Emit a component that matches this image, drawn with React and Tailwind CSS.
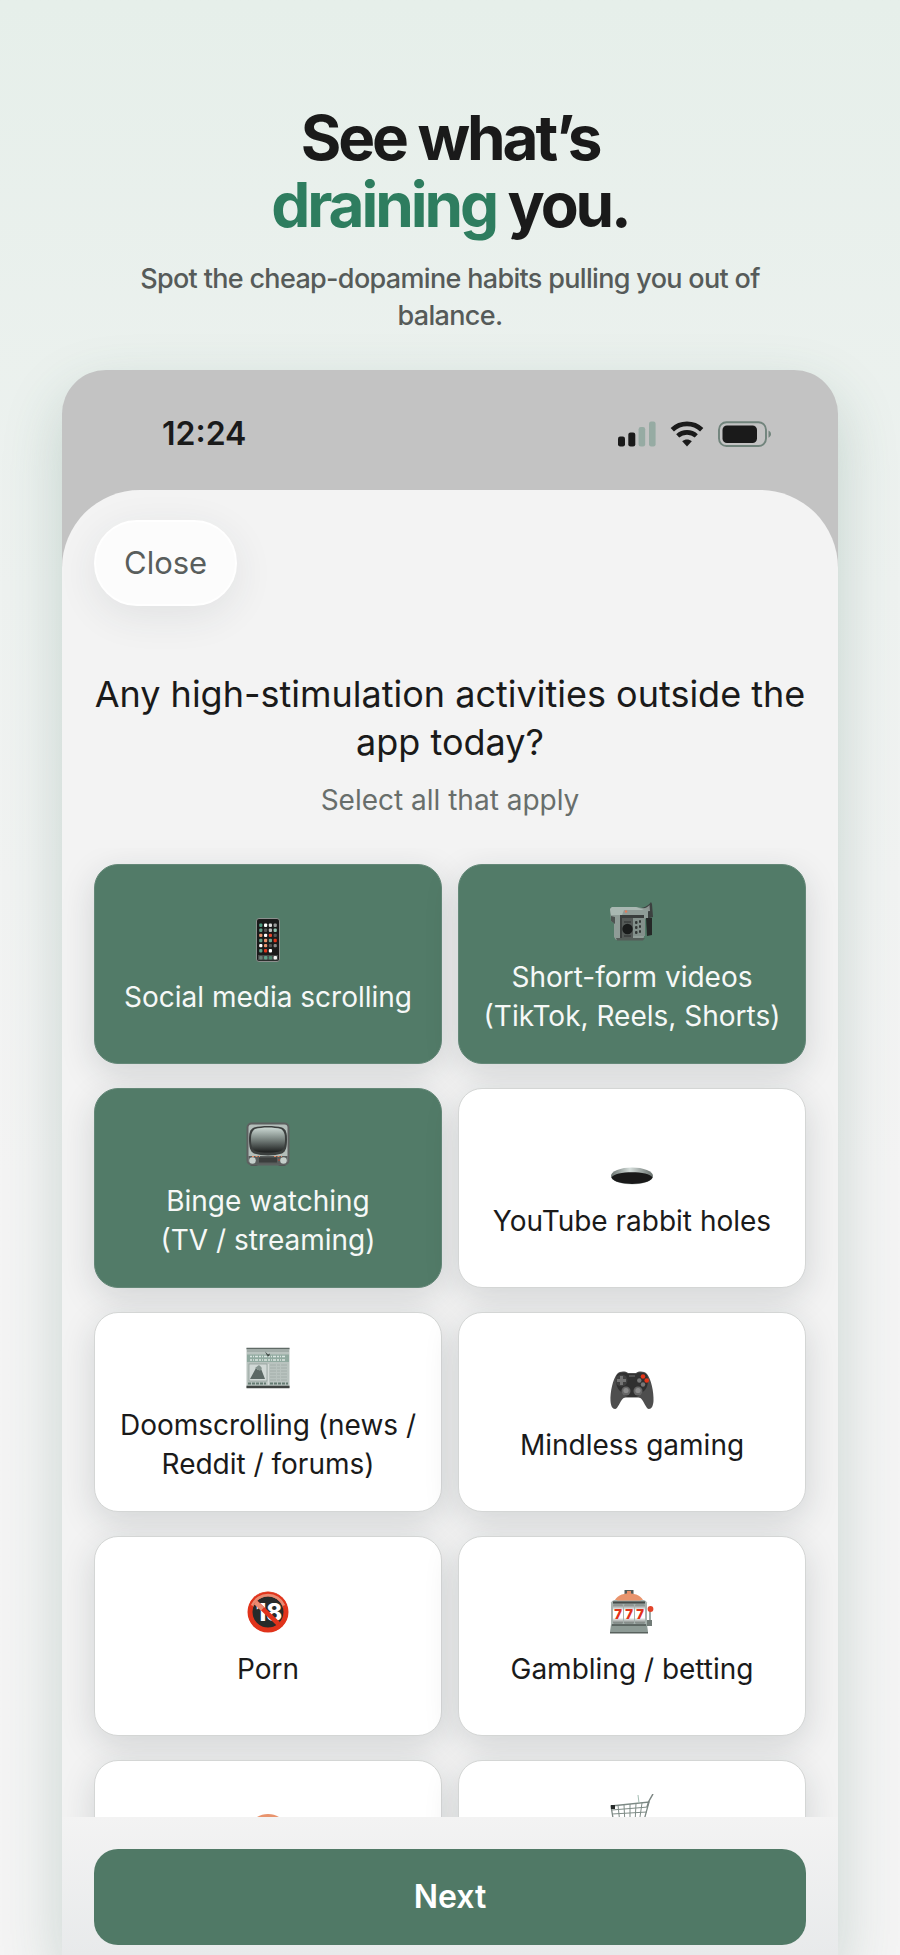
import React, { useState } from "react";

function PhoneIcon() {
  const colors = ["#4f9a80", "#fff", "#ddd", "#999", "#5f9f88", "#555", "#bbb", "#8fc3b0", "#e8936c", "#fff", "#e0432a", "#555", "#5f9f88", "#e8936c", "#6fa592", "#e0341a", "#fff", "#e8936c", "#555", "#888", "#5f9f88", "#e0341a", "#fff", "#1a1a1a"];
  return (
    <svg viewBox="0 0 44 44" className="size-11" aria-hidden="true">
      <rect x="10.5" y="0.5" width="23" height="43" rx="2.5" fill="#1a1a1a" stroke="#8b8f8d" />
      {colors.map((c, i) => (
        <rect key={i} x={13.2 + (i % 4) * 4.8} y={5.5 + Math.floor(i / 4) * 5.1} width="3.2" height="3.4" rx="1" fill={c} />
      ))}
      <rect x="12" y="37" width="20" height="5.4" fill="#454948" />
      {["#6b7f77", "#5f9f88", "#4f8a72", "#f4f4f4"].map((c, i) => (
        <rect key={c} x={13.2 + i * 4.8} y="38" width="3.4" height="3.6" rx="1" fill={c} />
      ))}
    </svg>
  );
}

function CameraIcon() {
  return (
    <svg viewBox="0 -1 44 44" className="size-11" aria-hidden="true">
      <path d="M26 10c8-1 12-3 15-7l1 2 1 13-7 2z" fill="#3c4140" />
      <path d="M28 10.500c6-.5 9-2 11.500-4.500l.5 6-9 1z" fill="#8e9693" />
      <path d="M0 10l2-2h24l12 2v9l-4 1v18l-2 3H6l-2-3V24l-3-2z" fill="#8f9c97" />
      <path d="M0 10l2-2h24l8 3H14l-2 5H1z" fill="#a9b8b2" />
      <path d="M1 17l4 1v7l-4-3z" fill="#4d5351" />
      <path d="M10 16h24v3H12v20h-2z" fill="#3a3e3d" />
      <rect x="12" y="19" width="11" height="20" fill="#555a58" />
      <rect x="23" y="19" width="12" height="18" fill="#83908b" />
      <circle cx="17.500" cy="30" r="5.200" fill="#191b1b" />
      <path d="M14 23h7M14 37h7" stroke="#3a3e3d" strokeWidth="1.500" />
      {[22, 27, 32].map((y) => (
        <g key={y} fill="#343837">
          <rect x="25" y={y} width="2.500" height="3" rx="1" />
          <rect x="29" y={y - 1} width="2" height="3" rx="1" />
        </g>
      ))}
      <path d="M36 19h6v17l-5 1z" fill="#252827" />
      <path d="M6 39h29l-2 2.500H7z" fill="#555d59" />
      <circle cx="16" cy="12.500" r="1.200" fill="#e07a5a" />
    </svg>
  );
}

function TvIcon() {
  return (
    <svg viewBox="0 0 44 44" className="size-11" aria-hidden="true">
      <defs>
        <linearGradient id="tvScreen" x1="0" y1="0" x2="0" y2="1">
          <stop offset="0" stopColor="#cbd8d3" />
          <stop offset="0.45" stopColor="#7d8884" />
          <stop offset="1" stopColor="#1c1e1e" />
        </linearGradient>
      </defs>
      <rect x="4" y="40" width="8" height="4" rx="2" fill="#4a4d4c" />
      <rect x="32" y="40" width="8" height="4" rx="2" fill="#4a4d4c" />
      <rect x="1.500" y="1.500" width="41" height="41" rx="4" fill="#b4beba" stroke="#5d6160" strokeWidth="2" />
      <path d="M2.500 34h39v5a3 3 0 0 1-3 3h-33a3 3 0 0 1-3-3z" fill="#595d5c" />
      <path d="M8 5.500c8-2 20-2 28 0 4 2 5 5 5 12s-1 12-5 14c-8 2.500-20 2.500-28 0-4-2-5-7-5-14s1-10 5-12z" fill="#3b3f3e" />
      <path d="M9 7c7-2 19-2 26 0 3 2 4 5 4 10.500s-1 9-4 11.500c-7 2-19 2-26 0-3-2.500-4-6-4-11.500S6 9 9 7z" fill="url(#tvScreen)" />
      <rect x="13" y="35.500" width="18" height="5" fill="#3b3e3d" />
      <circle cx="6.500" cy="38.500" r="3.300" fill="#c5cfcb" />
      <circle cx="37.500" cy="38.500" r="3.300" fill="#c5cfcb" />
      <path d="M6 34.500h8M28 34.500h8" stroke="#e2865f" strokeWidth="1" strokeDasharray="2 1.500" />
      <circle cx="33" cy="38" r="0.800" fill="#d5432a" />
    </svg>
  );
}

function HoleIcon() {
  return (
    <svg viewBox="0 -3 44 44" className="size-11" aria-hidden="true">
      <defs>
        <linearGradient id="holeRim">
          <stop offset="0" stopColor="#6c7572" />
          <stop offset="0.45" stopColor="#d5dedb" />
          <stop offset="1" stopColor="#666e6b" />
        </linearGradient>
      </defs>
      <ellipse cx="22" cy="31" rx="21" ry="8.500" fill="url(#holeRim)" />
      <path d="M1.500 32.500C5 25.500 39 25.500 42.500 32.500 39 41 5 41 1.500 32.500z" fill="#191919" />
    </svg>
  );
}

function NewspaperIcon() {
  return (
    <svg viewBox="0 0 44 44" className="size-11" aria-hidden="true">
      <rect x="0.500" y="2" width="43" height="40" fill="#b9c3bf" />
      <path d="M0.500 2.500h43" stroke="#5f6a66" strokeWidth="1.500" />
      <path d="M1 5h42" stroke="#8a9692" strokeWidth="1" />
      <rect x="1" y="8.500" width="42" height="7.500" fill="#91aaa0" />
      <path d="M4 10.500h36M4 14h36" stroke="#dbe6e1" strokeWidth="1.400" strokeDasharray="2 1 1 1 3 1" />
      <path d="M19 5.500l3 3 2-1-1 3-2-1z" fill="#3c4442" />
      <rect x="3" y="18" width="18" height="17" fill="#d1d9d6" stroke="#8c9894" strokeWidth="0.700" />
      <path d="M4 33l6-11 2 2 2-4 5 13z" fill="#5c6965" />
      <path d="M9 22l4-3 3 3-2 3-3-2z" fill="#84928d" />
      <path d="M24 19h17M24 22h17M24 25h17M24 28h17M24 31h17M24 34h17" stroke="#a3aeaa" strokeWidth="1" strokeDasharray="6 1 3 1" />
      <path d="M2 37.500h18M24 37.500h18" stroke="#647b72" strokeWidth="2" strokeDasharray="3 1" />
      <path d="M0.500 41h43" stroke="#3f4341" strokeWidth="2.400" />
      <path d="M22.300 18v21" stroke="#dbe2df" />
    </svg>
  );
}

function GamepadIcon() {
  return (
    <svg viewBox="0 -2 44 44" className="size-11" aria-hidden="true">
      <path d="M7 6c3-3 8-3 11-1h8c3-2 8-2 11 1 4 5 7 18 6.500 27-.3 5-2 8-4.500 8-3 0-5-8-8-10.500-1-1-2-1-4-1H17c-2 0-3 0-4 1C10 33 8 41 5 41c-2.500 0-4.200-3-4.500-8C0 24 3 11 7 6z" fill="#4e4e4e" />
      <path d="M7 7c3-3 8-3 11-1h8c3-2 8-2 11 1 2 4 1 13-3 16-4 3-6 6-8 6h-8c-2 0-4-3-8-6C6 20 5 11 7 7z" fill="#303030" />
      <circle cx="11.500" cy="12.500" r="6" fill="#414141" />
      <path d="M11.500 8v9M7 12.500h9" stroke="#747474" strokeWidth="3" />
      <circle cx="33" cy="8.500" r="2.300" fill="#e63416" />
      <circle cx="36.700" cy="12.500" r="2.300" fill="#e63416" />
      <circle cx="29.300" cy="12.500" r="2.200" fill="#777" />
      <circle cx="33" cy="16.500" r="2.200" fill="#777" />
      <circle cx="16" cy="23" r="4.500" fill="#666" />
      <circle cx="28" cy="23" r="4.500" fill="#666" />
      <circle cx="16" cy="22.500" r="2.600" fill="#8b8b8b" />
      <circle cx="28" cy="22.500" r="2.600" fill="#8b8b8b" />
      <path d="M19 8h6" stroke="#686868" strokeWidth="1.200" />
    </svg>
  );
}

function AdultIcon() {
  return (
    <svg viewBox="0 0 44 44" className="size-11" aria-hidden="true">
      <circle cx="22" cy="22" r="20.500" fill="#e0331b" />
      <path d="M4 16a18.500 18.500 0 0 1 36 0l-4 2a16 16 0 0 0-28-1z" fill="#e98b72" />
      <circle cx="22" cy="22" r="15.500" fill="#272b2a" />
      <text x="23" y="30.500" textAnchor="middle" fontSize="24" fontWeight="800" fontFamily="Inter, sans-serif" fill="#fff">18</text>
      <path d="M9.500 12l23 22" stroke="#e0331b" strokeWidth="4.500" />
      <path d="M8.500 11.500l8 7.500" stroke="#e98b72" strokeWidth="4.500" />
      <circle cx="22" cy="22" r="18" fill="none" stroke="#e0331b" strokeWidth="4" />
      <path d="M6 15.500a17.500 17.500 0 0 1 32 0" fill="none" stroke="#e98b72" strokeWidth="2.500" />
    </svg>
  );
}

function SlotIcon() {
  return (
    <svg viewBox="0 0 44 44" className="size-11" aria-hidden="true">
      <defs>
        <linearGradient id="slotReel" x1="0" y1="0" x2="0" y2="1">
          <stop offset="0" stopColor="#777f7c" />
          <stop offset="0.3" stopColor="#fff" />
          <stop offset="0.7" stopColor="#fff" />
          <stop offset="1" stopColor="#6d7572" />
        </linearGradient>
      </defs>
      <rect x="14.500" y="0" width="9" height="5" fill="#565d5a" />
      <rect x="17" y="1" width="4" height="3" fill="#e88c66" />
      <path d="M4 12c2-6 8-8.500 15-8.500S32 6 34 12z" fill="#e9946d" />
      <path d="M1 12.500c1-2 3-2.500 5-2.500h26c2 0 4 .5 5 2.500V35H1z" fill="#a7b2ae" />
      <path d="M7 10.500c3-4.500 7-6 12-6s9 1.500 12 6z" fill="#e9946d" />
      <path d="M3 12.500h32" stroke="#444b48" strokeWidth="2.200" />
      {[3, 14, 25].map((x) => (
        <g key={x}>
          <rect x={x} y="14.500" width="10" height="19" rx="1" fill="url(#slotReel)" />
          <text x={x + 5} y="28.500" textAnchor="middle" fontSize="13" fontWeight="900" fontFamily="Inter, sans-serif" fill="#e2331a">7</text>
        </g>
      ))}
      <path d="M1 34.500h36l1 7.500H0z" fill="#8d9a95" />
      <path d="M2 35h34" stroke="#4c5552" strokeWidth="1.500" />
      <path d="M0 42h38v1.500H0z" fill="#59625e" />
      <path d="M40 20v14" stroke="#9ea9a5" strokeWidth="2" />
      <circle cx="40.500" cy="19" r="2.900" fill="#e2442a" />
      <path d="M37 30h5v6h-5z" fill="#717b77" />
    </svg>
  );
}

function BurgerIcon() {
  return (
    <svg viewBox="0 0 44 44" className="size-11" aria-hidden="true">
      <path d="M2 18C4 6 12 0 22 0s18 6 20 18z" fill="#e9946d" />
      <path d="M1 19h42v5H1z" fill="#5f9f6a" />
      <rect x="2" y="24" width="40" height="8" rx="3" fill="#6a3f2a" />
      <path d="M3 33h38c0 6-4 9-8 9H11c-4 0-8-3-8-9z" fill="#e9946d" />
    </svg>
  );
}

function CartIcon() {
  return (
    <svg viewBox="0 0 44 44" className="size-11" aria-hidden="true" fill="none">
      <path d="M1 12l38-4-6 22H4z" stroke="#7d8985" strokeWidth="1.300" />
      <path d="M2 16l36-3M2 20l35-2M3 24h33M3 27h31M8 11l2 19M14 11l1 19M20 10v20M26 9l-1 21M32 9l-3 21" stroke="#7f8c87" strokeWidth="1" />
      <path d="M37 13l2-6 4-7" stroke="#7b8582" strokeWidth="1.500" />
      <path d="M28 1l1 8" stroke="#a4bdb3" />
      <rect x="1" y="11" width="4" height="4" fill="#272b2a" />
      <path d="M5 30l3 5h26" stroke="#7d8985" strokeWidth="1.500" />
      <circle cx="10" cy="39" r="3" fill="#4a4f4d" />
      <circle cx="31" cy="39" r="3" fill="#4a4f4d" />
    </svg>
  );
}

function StatusIcons() {
  return (
    <div className="flex items-center gap-3.5">
      <svg viewBox="0 0 38 26" className="h-6.5 w-9.5" role="img" aria-label="Signal">
        <rect x="0" y="15.500" width="7" height="10" rx="2.200" fill="#1a1a1a" />
        <rect x="10.300" y="11.500" width="7" height="14" rx="2.200" fill="#1a1a1a" />
        <rect x="20.600" y="6" width="6.600" height="19.500" rx="2.200" fill="#96aba3" />
        <rect x="31" y="0.500" width="6.600" height="25" rx="2.200" fill="#96aba3" />
      </svg>
      <svg viewBox="0 0 34 26" className="h-6.5 w-8.5" role="img" aria-label="Wi-Fi" fill="none" stroke="#1a1a1a">
        <path d="M2.300 8.700a21.500 21.500 0 0 1 29.400 0" strokeWidth="4.800" />
        <path d="M7.700 14.900a14 14 0 0 1 18.600 0" strokeWidth="4.600" />
        <path d="M17 25.500l-4.800-5.200c2.800-2.300 6.800-2.300 9.600 0z" fill="#1a1a1a" stroke="none" />
      </svg>
      <svg viewBox="0 0 54 26" className="h-6.5 w-13.5" role="img" aria-label="Battery">
        <rect x="1" y="1.200" width="47" height="23.800" rx="7.500" fill="none" stroke="#71847c" strokeWidth="1.900" />
        <rect x="4.500" y="4.500" width="34.500" height="17.500" rx="4.500" fill="#1a1a1a" />
        <path d="M50.500 9.500c3.300 1.600 3.300 5.600 0 7.200z" fill="#71847c" />
      </svg>
    </div>
  );
}

const ACTIVITIES = [
  { id: "social", label: "Social media scrolling", Icon: PhoneIcon },
  { id: "short", label: "Short-form videos\n(TikTok, Reels, Shorts)", Icon: CameraIcon },
  { id: "binge", label: "Binge watching\n(TV / streaming)", Icon: TvIcon },
  { id: "youtube", label: "YouTube rabbit holes", Icon: HoleIcon },
  { id: "doom", label: "Doomscrolling (news /\nReddit / forums)", Icon: NewspaperIcon },
  { id: "gaming", label: "Mindless gaming", Icon: GamepadIcon },
  { id: "porn", label: "Porn", Icon: AdultIcon },
  { id: "gambling", label: "Gambling / betting", Icon: SlotIcon },
  { id: "food", name: "Food", label: "\u00a0", Icon: BurgerIcon },
  { id: "shopping", name: "Shopping", label: "\u00a0\n\u00a0", Icon: CartIcon },
];

function ActivityCard({ label, name, Icon, selected, onToggle }) {
  const look = selected
    ? "border-[#648878] bg-[#527b68] text-[#f6f8f7]"
    : "border-[#d4d6d5] bg-white text-[#1a1a1a]";
  return (
    <button
      type="button"
      aria-label={name}
      aria-pressed={selected}
      onClick={onToggle}
      className={`flex h-50 flex-col items-center justify-center gap-3.5 rounded-3xl border shadow-[0_10px_34px_rgba(30,40,45,0.15)] ${look}`}
    >
      <span className="flex h-13 items-center pt-1">
        <Icon />
      </span>
      <span className="text-[28px] leading-[39px] whitespace-pre">{label}</span>
    </button>
  );
}

export default function App() {
  const [selected, setSelected] = useState(["social", "short", "binge"]);
  const toggle = (id) =>
    setSelected((list) => (list.includes(id) ? list.filter((x) => x !== id) : [...list, id]));

  return (
    <main className="flex h-screen flex-col overflow-hidden bg-linear-to-b from-[#e6efea] via-[#eef2f0] via-30% to-[#f4f4f4] to-60% px-15.5 pt-26 font-['Inter',sans-serif] text-[#1a1a1a]">
      <header className="text-center">
        <h1 className="text-[62px] leading-[67px] font-bold tracking-tighter">
          See what’s
          <br />
          <span className="text-[#2e7d5f]">draining</span> you.
        </h1>
        <p className="mx-auto mt-5.5 max-w-160 text-[27px] leading-[37px] font-medium tracking-tight text-[#565b59]">
          Spot the cheap-dopamine habits pulling you out of balance.
        </p>
      </header>

      <section className="mt-9 flex min-h-0 flex-1 flex-col overflow-hidden rounded-t-[44px] bg-[#c3c3c3] shadow-[0_24px_60px_rgba(46,100,80,0.22)]">
        <div className="flex h-30 shrink-0 items-center justify-between pt-2 pr-16.5 pl-25">
          <time className="text-[32px] leading-10 font-semibold">12:24</time>
          <StatusIcons />
        </div>

        <div className="flex min-h-0 flex-1 flex-col rounded-t-[78px] bg-[#f3f3f3]">
          <div className="shrink-0 px-8 pt-7.5">
            <button
              type="button"
              className="h-21.5 rounded-full border-2 border-white bg-[#fcfcfc] px-7 text-[31px] text-[#595e5c] shadow-[0_10px_40px_rgba(40,50,70,0.09)]"
            >
              Close
            </button>
          </div>
          <div className="shrink-0 px-7 pt-16 pb-7.5 text-center">
            <h2 className="text-[36px] leading-12">Any high-stimulation activities outside the app today?</h2>
            <p className="mt-4 text-[28px] leading-9 text-[#686e6b]">Select all that apply</p>
          </div>

          <div className="min-h-0 flex-1 overflow-y-auto px-8 pt-4 [scrollbar-width:none]">
            <div className="grid grid-cols-2 gap-x-4 gap-y-6 pb-6">
              {ACTIVITIES.map((a) => (
                <ActivityCard
                  key={a.id}
                  label={a.label}
                  name={a.name}
                  Icon={a.Icon}
                  selected={selected.includes(a.id)}
                  onToggle={() => toggle(a.id)}
                />
              ))}
            </div>
          </div>

          <div className="flex shrink-0 bg-linear-to-b from-[#f3f3f3] to-[#e8eaeb] px-8 pt-8 pb-2.5">
            <button type="button" className="h-24 flex-1 rounded-3xl bg-[#507966] text-[32px] font-semibold text-white">
              Next
            </button>
          </div>
        </div>
      </section>
    </main>
  );
}
